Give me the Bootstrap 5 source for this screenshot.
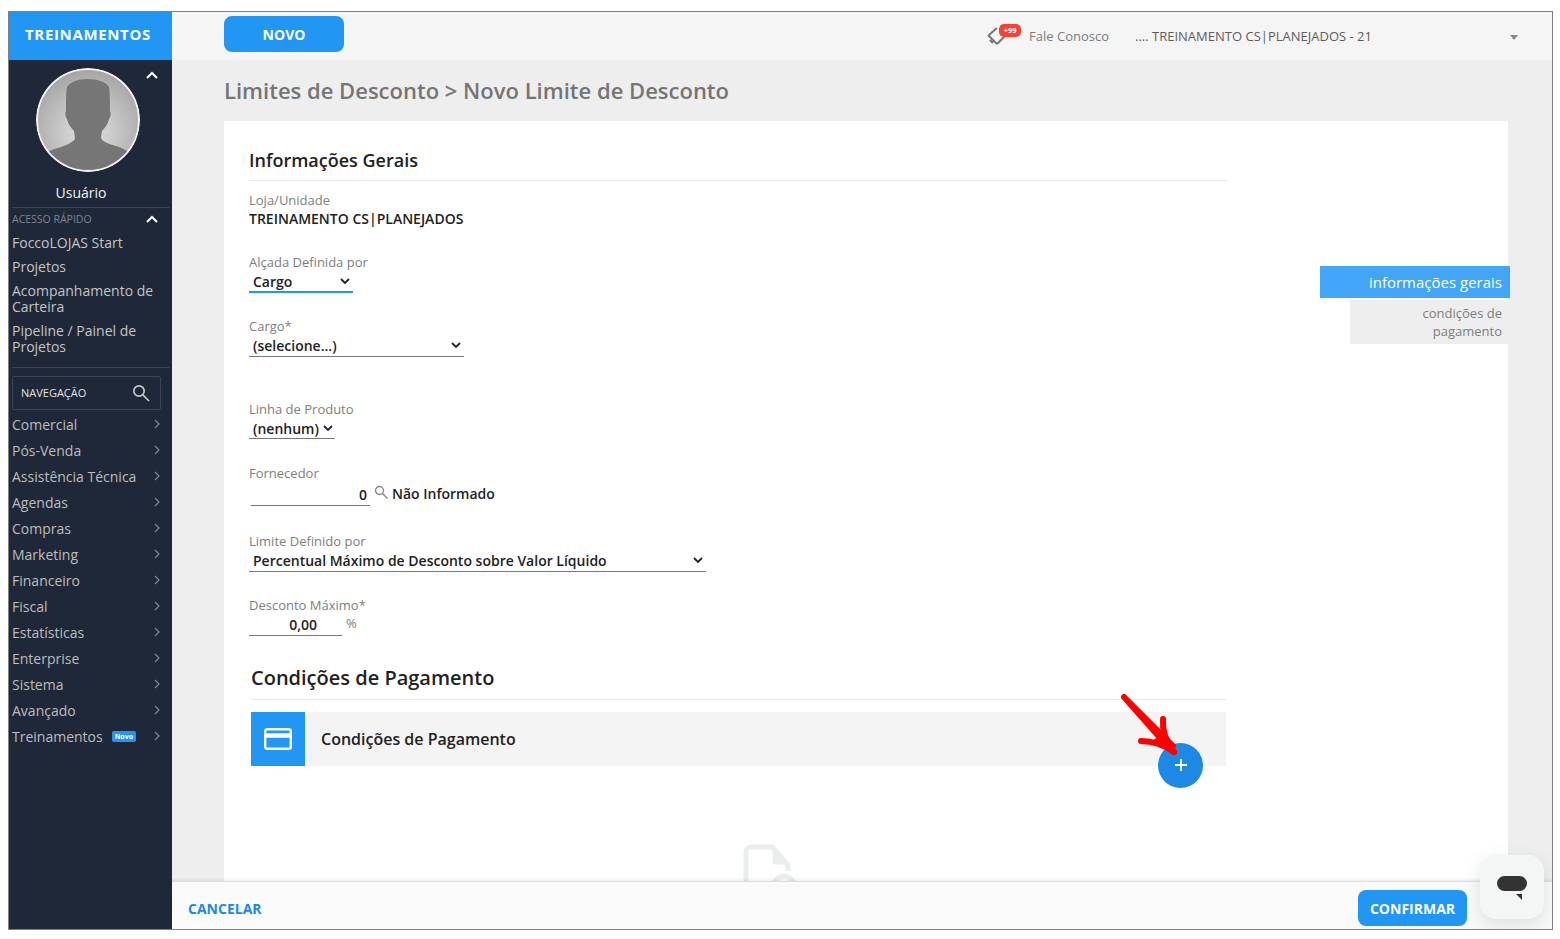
<!DOCTYPE html>
<html lang="pt-BR">
<head>
<meta charset="utf-8">
<title>Novo Limite de Desconto</title>
<link href="https://cdn.jsdelivr.net/npm/bootstrap@5.3.0/dist/css/bootstrap.min.css" rel="stylesheet">
<style>
html,body{height:100%;margin:0;background:#fff;overflow:hidden}
body{font-family:"Open Sans","Liberation Sans",sans-serif;color:#1b1b1b;font-size:14px}
.frame{position:absolute;left:8px;top:11px;width:1545px;height:919px;border:1px solid #808080;display:flex;background:#eee;overflow:hidden}
.side{width:163px;flex:none;background:#1e2838;color:#c9c9c9;display:flex;flex-direction:column}
.brand{height:48px;background:#2196f3;color:#fff;font-weight:700;font-size:15px;display:flex;align-items:center;justify-content:center;letter-spacing:.65px;flex:none;padding:0 5px 3px 0}
.prof{position:relative;height:147px;padding-top:8px;text-align:center}
.avatar{width:104px;height:104px;border-radius:50%;display:block;margin-left:27px}
.chev-top{position:absolute;left:136px;top:11px}
.uname{color:#f2f2f2;font-size:14px;position:absolute;left:0;width:144px;top:124px;line-height:18px}
.quick{margin:0 3px;border-top:1px solid #3a4557;height:24px;display:flex;justify-content:space-between;align-items:center;font-size:10.5px;color:#7c8594}
.quick svg{margin-right:10px}
.qlink{display:block;color:#c4c4c4;font-size:14px;line-height:16px;padding:4px 3px;text-decoration:none}
.rule{margin:8px 3px 0;border-top:1px solid #3a4557}
.search{margin:8px 11px 1px 3px;height:34px;border:1px solid #3a4557;border-radius:2px;display:flex;align-items:center;justify-content:space-between;padding:0 10px 0 8px;font-size:11px;color:#e2e2e2}
.mitem{height:26px;display:flex;align-items:center;padding:0 12px 0 3px;color:#bdbdbd;font-size:14px;text-decoration:none}
.mitem .lbl{flex:1}
.tag{background:#2196f3;color:#fff;font-size:7px;font-weight:700;line-height:11px;padding:0 3px;border-radius:2px;margin-right:18px}
.main{flex:1;min-width:0;display:flex;flex-direction:column;position:relative}
.topbar{height:48px;background:#f5f5f5;flex:none;display:flex;align-items:center;padding-left:52px}
.btn-new{width:120px;height:36px;background:#2196f3;color:#fff;font-weight:700;font-size:14px;border:0;border-radius:8px;padding:0;margin-bottom:4px}
.contact{margin-left:auto;margin-top:2px;display:flex;align-items:center;color:#7d7d7d;font-size:13px;position:relative}
.bell-wrap{position:relative;width:41px;height:26px;margin-right:0}
.cnt{position:absolute;left:11px;top:0;background:#f44336;color:#fff;font-size:7.5px;font-weight:700;line-height:13px;height:13px;width:22px;text-align:center;border-radius:5px}
.store{width:417px;margin-left:26px;padding-right:34px;display:flex;justify-content:space-between;align-items:center;color:#5d5d5d;font-size:13px;margin-right:0}
.caret-d{width:0;height:0;border-left:4px solid transparent;border-right:4px solid transparent;border-top:5px solid #888}
.crumb{height:61px;flex:none;padding-left:52px;display:flex;align-items:center;font-size:22px;font-weight:600;color:#757575}
.body-wrap{flex:1;min-height:0;margin:0 44px 0 52px;background:#fff;display:flex;position:relative}
.formcol{width:1003px;padding:0 0 0 25px;flex:none}
.sect{font-size:18px;font-weight:600;color:#222;line-height:24px;padding-top:27px;padding-bottom:8px;border-bottom:1px solid #e8e8e8}
.flabel{display:block;color:#7e7e7e;font-size:13px;line-height:18px}
.fval{font-size:14px;font-weight:600;color:#222;line-height:20px;display:block}
.under{display:inline-flex;align-items:center;justify-content:space-between;border-bottom:1px solid #777;height:21px;font-size:14px;font-weight:600;color:#222;padding:0 3px 0 4px}
.f1{margin-top:10px}.f2{margin-top:24px}.f3{margin-top:24px}.f4{margin-top:43px}.f5{margin-top:25px}.f6{margin-top:26px}.f7{margin-top:24px}
.w-sel1{width:104px;border-bottom-color:#2196f3;border-bottom-width:2px}
.w-sel2{width:215px}.w-sel3{width:86px;padding-right:2px}.w-sel4{width:457px}
.w-num{width:119px;height:24px;justify-content:flex-end;padding:2px 3px 0 0;margin:0 4px 0 2px}
.w-dec{width:93px;height:22px;justify-content:flex-end;padding:0 25px 0 0;margin-right:4px}
.sect2{margin-left:2px;margin-right:1px;font-size:20px;font-weight:600;color:#222;line-height:26px;margin-top:29px;padding-bottom:8px;border-bottom:1px solid #e8e8e8}
.panel{margin:12px 1px 0 2px;height:54px;background:#f4f4f4;display:flex;align-items:center;position:relative}
.panel-ic{width:54px;height:54px;background:#2196f3;display:flex;align-items:center;justify-content:center;margin-right:16px}
.panel-t{font-size:16px;font-weight:600;color:#222}
.fab{position:absolute;right:23px;top:31px;width:45px;height:45px;border-radius:50%;background:#1e88e5;display:flex;align-items:center;justify-content:center;border:0;padding:0}
.arrow{position:absolute;right:22px;top:-18px;pointer-events:none}
.ghost{display:block;margin:78px 0 0 494px}
.sidenav{flex:1;padding-top:145px;text-align:right}
.snav-on{background:#42a5f5;color:#fff;font-size:15px;height:32px;line-height:33px;padding-right:8px;margin-right:-2px;margin-left:93px}
.snav-off{background:#eee;color:#7d7d7d;font-size:13px;line-height:18px;height:44px;padding:4px 6px 0 0;margin-left:123px;margin-top:2px}
.foot{height:48px;flex:none;background:#fafafa;border-top:1px solid #ddd;box-shadow:0 -1px 3px rgba(0,0,0,.1);display:flex;align-items:center;justify-content:space-between;padding:0 85px 0 16px;position:relative;z-index:2}
.cancel{color:#1e88e5;font-weight:700;font-size:14px;text-decoration:none;margin-top:6px}
.confirm{width:109px;height:36px;background:#2196f3;color:#fff;font-weight:700;font-size:14px;border:0;border-radius:8px;padding:0;margin-top:5px}
.chat{position:absolute;right:8px;bottom:10px;width:64px;height:64px;background:#f4f5f5;border-radius:16px;box-shadow:0 6px 18px rgba(60,80,90,.16);z-index:3;display:flex;align-items:center;justify-content:center}
</style>
</head>
<body>
<div class="frame">
  <aside class="side">
    <div class="brand">TREINAMENTOS</div>
    <div class="prof">
      <svg class="avatar" viewBox="0 0 104 104"><defs><radialGradient id="g" cx=".5" cy=".62" r=".6"><stop offset="0" stop-color="#e4e4e4"/><stop offset="1" stop-color="#a6a6a6"/></radialGradient><clipPath id="c"><circle cx="52" cy="52" r="50"/></clipPath></defs><circle cx="52" cy="52" r="51" fill="url(#g)" stroke="#f5f5f5" stroke-width="2"/><path clip-path="url(#c)" fill="#767676" d="M51 11c-9 0-17 3-20 8-1 6-1 16-1 24-1 2-1 5 1 8 1 5 4 9 7 12l1 8c-3 4-10 7-17 9-5 1-9 3-12 6v18h84V85c-3-2-7-5-14-7-7-2-13-4-15-8l1-7c3-3 6-7 7-12 2-3 2-6 1-8 0-8 0-18-1-24-3-5-11-8-22-8z"/></svg>
      <svg class="chev-top" width="14" height="9" viewBox="0 0 14 9"><path d="M2 7l5-5 5 5" fill="none" stroke="#fff" stroke-width="2"/></svg>
      <div class="uname">Usuário</div>
    </div>
    <div class="quick"><span>ACESSO RÁPIDO</span><svg width="14" height="9" viewBox="0 0 14 9"><path d="M2 7l5-5 5 5" fill="none" stroke="#fff" stroke-width="2"/></svg></div>
    <a class="qlink" href="#">FoccoLOJAS Start</a>
    <a class="qlink" href="#">Projetos</a>
    <a class="qlink" href="#">Acompanhamento de Carteira</a>
    <a class="qlink" href="#">Pipeline / Painel de Projetos</a>
    <div class="rule"></div>
    <div class="search"><span>NAVEGAÇÃO</span><svg width="18" height="18" viewBox="0 0 18 18" fill="none" stroke="#c8c8c8" stroke-width="1.7"><circle cx="7" cy="7" r="5.2"/><path d="M11 11l6 6"/></svg></div>
    <a class="mitem" href="#"><span class="lbl">Comercial</span><svg width="6" height="10" viewBox="0 0 6 10"><path d="M1 1l4 4-4 4" fill="none" stroke="#8d8d8d" stroke-width="1.1"/></svg></a>
    <a class="mitem" href="#"><span class="lbl">Pós-Venda</span><svg width="6" height="10" viewBox="0 0 6 10"><path d="M1 1l4 4-4 4" fill="none" stroke="#8d8d8d" stroke-width="1.1"/></svg></a>
    <a class="mitem" href="#"><span class="lbl">Assistência Técnica</span><svg width="6" height="10" viewBox="0 0 6 10"><path d="M1 1l4 4-4 4" fill="none" stroke="#8d8d8d" stroke-width="1.1"/></svg></a>
    <a class="mitem" href="#"><span class="lbl">Agendas</span><svg width="6" height="10" viewBox="0 0 6 10"><path d="M1 1l4 4-4 4" fill="none" stroke="#8d8d8d" stroke-width="1.1"/></svg></a>
    <a class="mitem" href="#"><span class="lbl">Compras</span><svg width="6" height="10" viewBox="0 0 6 10"><path d="M1 1l4 4-4 4" fill="none" stroke="#8d8d8d" stroke-width="1.1"/></svg></a>
    <a class="mitem" href="#"><span class="lbl">Marketing</span><svg width="6" height="10" viewBox="0 0 6 10"><path d="M1 1l4 4-4 4" fill="none" stroke="#8d8d8d" stroke-width="1.1"/></svg></a>
    <a class="mitem" href="#"><span class="lbl">Financeiro</span><svg width="6" height="10" viewBox="0 0 6 10"><path d="M1 1l4 4-4 4" fill="none" stroke="#8d8d8d" stroke-width="1.1"/></svg></a>
    <a class="mitem" href="#"><span class="lbl">Fiscal</span><svg width="6" height="10" viewBox="0 0 6 10"><path d="M1 1l4 4-4 4" fill="none" stroke="#8d8d8d" stroke-width="1.1"/></svg></a>
    <a class="mitem" href="#"><span class="lbl">Estatísticas</span><svg width="6" height="10" viewBox="0 0 6 10"><path d="M1 1l4 4-4 4" fill="none" stroke="#8d8d8d" stroke-width="1.1"/></svg></a>
    <a class="mitem" href="#"><span class="lbl">Enterprise</span><svg width="6" height="10" viewBox="0 0 6 10"><path d="M1 1l4 4-4 4" fill="none" stroke="#8d8d8d" stroke-width="1.1"/></svg></a>
    <a class="mitem" href="#"><span class="lbl">Sistema</span><svg width="6" height="10" viewBox="0 0 6 10"><path d="M1 1l4 4-4 4" fill="none" stroke="#8d8d8d" stroke-width="1.1"/></svg></a>
    <a class="mitem" href="#"><span class="lbl">Avançado</span><svg width="6" height="10" viewBox="0 0 6 10"><path d="M1 1l4 4-4 4" fill="none" stroke="#8d8d8d" stroke-width="1.1"/></svg></a>
    <a class="mitem" href="#"><span>Treinamentos</span><span class="lbl"></span><span class="tag">Novo</span><svg width="6" height="10" viewBox="0 0 6 10"><path d="M1 1l4 4-4 4" fill="none" stroke="#8d8d8d" stroke-width="1.1"/></svg></a>
  </aside>
  <div class="main">
    <header class="topbar">
      <button class="btn-new" type="button">NOVO</button>
      <div class="contact">
        <span class="bell-wrap"><svg width="22" height="22" viewBox="0 0 22 22" style="position:absolute;left:-1px;top:2px"><path d="M2 9l8-7M1 9l9 9M10 18l8-8" fill="none" stroke="#777" stroke-width="2"/><path d="M3 14l3 3" fill="none" stroke="#777" stroke-width="2.4"/></svg><span class="cnt">+99</span></span>
        <span>Fale Conosco</span>
        <span class="store"><span>.... TREINAMENTO CS|PLANEJADOS - 21</span><i class="caret-d"></i></span>
      </div>
    </header>
    <div class="crumb">Limites de Desconto &gt; Novo Limite de Desconto</div>
    <div class="body-wrap">
      <div class="formcol">
        <div class="sect">Informações Gerais</div>
        <div class="f1"><span class="flabel">Loja/Unidade</span><span class="fval">TREINAMENTO CS|PLANEJADOS</span></div>
        <div class="f2"><span class="flabel">Alçada Definida por</span><span class="under w-sel1">Cargo <svg width="10" height="7" viewBox="0 0 10 7"><path d="M1 1l4 4 4-4" fill="none" stroke="#222" stroke-width="1.8"/></svg></span></div>
        <div class="f3"><span class="flabel">Cargo*</span><span class="under w-sel2">(selecione...) <svg width="10" height="7" viewBox="0 0 10 7"><path d="M1 1l4 4 4-4" fill="none" stroke="#222" stroke-width="1.8"/></svg></span></div>
        <div class="f4"><span class="flabel">Linha de Produto</span><span class="under w-sel3">(nenhum) <svg width="10" height="7" viewBox="0 0 10 7"><path d="M1 1l4 4 4-4" fill="none" stroke="#222" stroke-width="1.8"/></svg></span></div>
        <div class="f5"><span class="flabel">Fornecedor</span><span class="d-flex align-items-center"><span class="under w-num">0</span><svg width="14" height="14" viewBox="0 0 14 14" fill="none" stroke="#8a8a8a" stroke-width="1.4" class="me-1 mb-1"><circle cx="5.5" cy="5.5" r="4"/><path d="M8.5 8.5l5 5"/></svg><span class="fval">Não Informado</span></span></div>
        <div class="f6"><span class="flabel">Limite Definido por</span><span class="under w-sel4">Percentual Máximo de Desconto sobre Valor Líquido <svg width="10" height="7" viewBox="0 0 10 7"><path d="M1 1l4 4 4-4" fill="none" stroke="#222" stroke-width="1.8"/></svg></span></div>
        <div class="f7"><span class="flabel">Desconto Máximo*</span><span class="d-flex align-items-start"><span class="under w-dec">0,00</span><span class="flabel">%</span></span></div>
        <div class="sect2">Condições de Pagamento</div>
        <div class="panel">
          <div class="panel-ic"><svg width="28" height="22" viewBox="0 0 28 22" fill="none" stroke="#fff" stroke-width="2.4"><rect x="1.2" y="1.2" width="25.6" height="19.6" rx="2"/><path d="M1 7.5h26" stroke-width="4.5"/></svg></div>
          <div class="panel-t">Condições de Pagamento</div>
          <button class="fab" type="button" aria-label="Adicionar"><svg width="14" height="14" viewBox="0 0 14 14"><path d="M7 1v12M1 7h12" stroke="#fff" stroke-width="1.8"/></svg></button>
          <svg class="arrow" width="86" height="66" viewBox="0 0 86 66" fill="#f00" stroke="#f00" stroke-linecap="round" stroke-linejoin="round"><path d="M6 3L52 55l3-3z" stroke-width="6"/><path d="M45 25C44 36 47 46 56 58" stroke-width="6" fill="none"/><path d="M23 47C35 47 45 50 56 58" stroke-width="6" fill="none"/><path d="M46 38L56 58 34 49z" stroke-width="2"/></svg>
        </div>
        <svg class="ghost" width="56" height="60" viewBox="0 0 56 60" fill="none" stroke="#e9eded" stroke-width="5"><path d="M3 50V8a5 5 0 0 1 5-5h21l16 18v6"/><path d="M30 4l14 16H32a2 2 0 0 1-2-2z" fill="#e9eded" stroke-width="1"/><circle cx="41" cy="42" r="10"/></svg>
      </div>
      <nav class="sidenav">
        <div class="snav-on">informações gerais</div>
        <div class="snav-off">condições de<br>pagamento</div>
      </nav>
    </div>
    <footer class="foot"><a class="cancel" href="#">CANCELAR</a><button class="confirm" type="button">CONFIRMAR</button></footer>
  </div>
  <div class="chat"><svg width="34" height="28" viewBox="0 0 34 28"><rect x="2" y="3" width="30" height="15" rx="7.5" fill="#333"/><path d="M21 21h6v6z" fill="#333"/></svg></div>
</div>
<script src="https://cdn.jsdelivr.net/npm/bootstrap@5.3.0/dist/js/bootstrap.bundle.min.js"></script>
</body>
</html>
